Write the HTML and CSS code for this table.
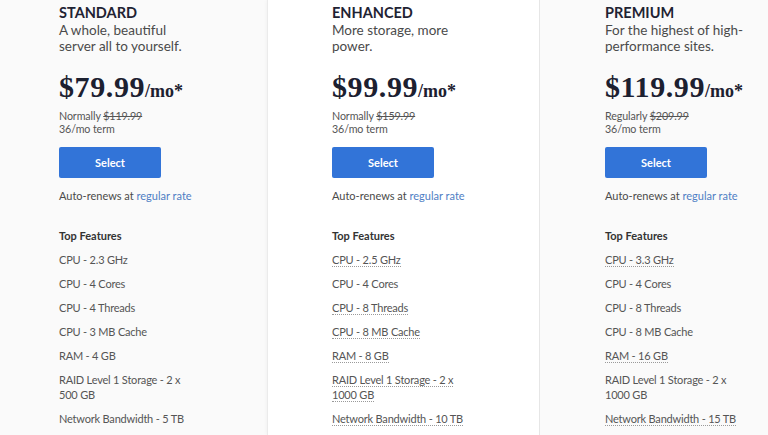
FILE: index.html
```html
<!DOCTYPE html>
<html lang="en">
<head>
<meta charset="utf-8">
<title>Plans</title>
<link rel="stylesheet" href="styles.css">
</head>
<body>
<div class="plans">
  <section class="plan">
    <h2 class="plan-name">STANDARD</h2>
    <p class="plan-desc">A whole, beautiful server all to yourself.</p>
    <div class="price"><span class="amount">$79.99</span><span class="per">/mo*</span></div>
    <p class="normal">Normally <s>$119.99</s><br>36/mo term</p>
    <button class="select">Select</button>
    <p class="renew">Auto-renews at <a href="#">regular rate</a></p>
    <h3 class="features-title">Top Features</h3>
    <ul class="features">
      <li>CPU - 2.3 GHz</li>
      <li>CPU - 4 Cores</li>
      <li>CPU - 4 Threads</li>
      <li>CPU - 3 MB Cache</li>
      <li>RAM - 4 GB</li>
      <li>RAID Level 1 Storage - 2 x 500 GB</li>
      <li>Network Bandwidth - 5 TB</li>
    </ul>
  </section>
  <section class="plan plan-featured">
    <h2 class="plan-name">ENHANCED</h2>
    <p class="plan-desc">More storage, more power.</p>
    <div class="price"><span class="amount">$99.99</span><span class="per">/mo*</span></div>
    <p class="normal">Normally <s>$159.99</s><br>36/mo term</p>
    <button class="select">Select</button>
    <p class="renew">Auto-renews at <a href="#">regular rate</a></p>
    <h3 class="features-title">Top Features</h3>
    <ul class="features">
      <li><span class="diff">CPU - 2.5 GHz</span></li>
      <li>CPU - 4 Cores</li>
      <li><span class="diff">CPU - 8 Threads</span></li>
      <li><span class="diff">CPU - 8 MB Cache</span></li>
      <li><span class="diff">RAM - 8 GB</span></li>
      <li><span class="diff">RAID Level 1 Storage - 2 x 1000 GB</span></li>
      <li><span class="diff">Network Bandwidth - 10 TB</span></li>
    </ul>
  </section>
  <section class="plan">
    <h2 class="plan-name">PREMIUM</h2>
    <p class="plan-desc">For the highest of high-performance sites.</p>
    <div class="price"><span class="amount">$119.99</span><span class="per">/mo*</span></div>
    <p class="normal">Regularly <s>$209.99</s><br>36/mo term</p>
    <button class="select">Select</button>
    <p class="renew">Auto-renews at <a href="#">regular rate</a></p>
    <h3 class="features-title">Top Features</h3>
    <ul class="features">
      <li><span class="diff">CPU - 3.3 GHz</span></li>
      <li>CPU - 4 Cores</li>
      <li>CPU - 8 Threads</li>
      <li>CPU - 8 MB Cache</li>
      <li><span class="diff">RAM - 16 GB</span></li>
      <li>RAID Level 1 Storage - 2 x 1000 GB</li>
      <li><span class="diff">Network Bandwidth - 15 TB</span></li>
    </ul>
  </section>
</div>
</body>
</html>
```

FILE: styles.css
```css
* { box-sizing: border-box; }
html, body {
  margin: 0;
  padding: 0;
  background: #fafafa;
  overflow: hidden;
}
body {
  font-family: Lato, "Noto Sans", sans-serif;
  color: #4a4a4a;
}
.plans {
  display: flex;
  margin-left: -6px;
  width: 774px;
  height: 435px;
  overflow: hidden;
}
.plan {
  flex: 0 0 273px;
  padding: 4px 0 0 65px;
  background: #fafafa;
}
.plan-featured {
  background: #ffffff;
  border-left: 1px solid #ebebeb;
  border-right: 1px solid #e6e6e6;
  box-shadow: 0 0 4px rgba(0, 0, 0, 0.05);
  padding-left: 64px;
}
.plan-name {
  margin: 0;
  font-size: 14.5px;
  line-height: 18px;
  font-weight: 700;
  color: #1f2333;
}
.plan-desc {
  margin: 0;
  width: 145px;
  font-size: 13.5px;
  line-height: 16px;
  color: #4a4a4a;
}
.price {
  margin-top: 16px;
  line-height: 34px;
  color: #1c2030;
  font-family: "Liberation Serif", "Times New Roman", serif;
  font-weight: 700;
  white-space: nowrap;
}
.amount { font-size: 30px; letter-spacing: 0.6px; }
.per { font-size: 18px; }
.normal {
  margin: 0;
  font-size: 10.7px;
  line-height: 13px;
  letter-spacing: -0.1px;
  color: #555;
}
.normal s { color: #555; }
.select {
  display: block;
  margin-top: 12px;
  width: 102px;
  height: 31px;
  border: 0;
  border-radius: 2px;
  background: #3274d8;
  color: #fff;
  font-family: inherit;
  font-size: 11px;
  font-weight: 700;
  cursor: pointer;
}
.renew {
  margin: 10px 0 0;
  font-size: 11px;
  line-height: 16px;
  color: #4a4a4a;
}
.renew a {
  color: #4f7ec4;
  text-decoration: none;
}
.features-title {
  margin: 24px 0 0;
  font-size: 11px;
  line-height: 16px;
  font-weight: 700;
  color: #333;
}
.features {
  list-style: none;
  margin: 8px 0 0;
  padding: 0;
  width: 138px;
  font-size: 11px;
  line-height: 15px;
  letter-spacing: -0.2px;
  color: #555;
}
.features li { margin-bottom: 9px; }
.diff { border-bottom: 1px dotted #9a9a9a; }
```
